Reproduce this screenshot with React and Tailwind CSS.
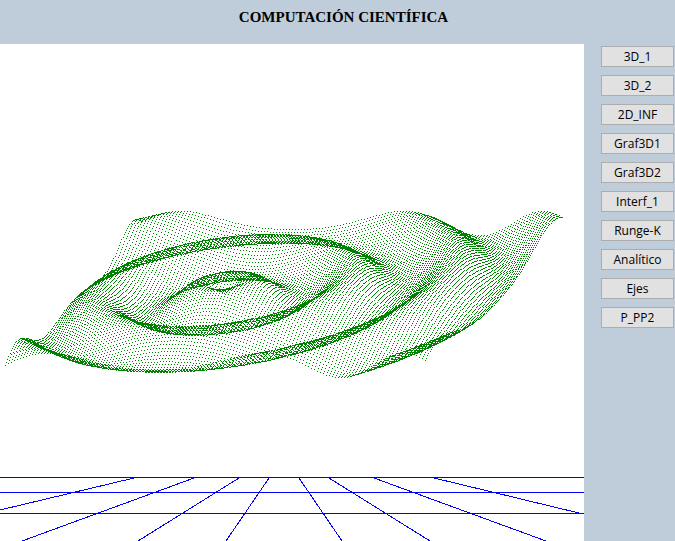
const demos = [
  "3D_1",
  "3D_2",
  "2D_INF",
  "Graf3D1",
  "Graf3D2",
  "Interf_1",
  "Runge-K",
  "Analítico",
  "Ejes",
  "P_PP2",
];

// Radial wave sampled on a regular grid and drawn in oblique projection.
const COLUMNS = 140;
const ROWS = 120;
const WAVELENGTH = 0.27;

function wavePath() {
  let d = "";
  for (let j = 0; j <= ROWS; j++) {
    for (let i = 0; i <= COLUMNS; i++) {
      const s = i / COLUMNS;
      const t = j / ROWS;
      const r = Math.hypot((s - 0.357) * 1.19, (t - 0.503) * 1.04);
      const z = 12.3 * Math.sin((2 * Math.PI * r) / WAVELENGTH);
      const x = Math.round(5 + 420 * s + 137 * t);
      const y = Math.round(321 - 142 * t - z);
      d += `M${x} ${y}h1v1h-1z`;
    }
  }
  return d;
}

const surface = wavePath();

function Plot() {
  return (
    <svg
      viewBox="0 0 584 497"
      className="block w-full"
      shapeRendering="crispEdges"
      role="img"
      aria-label="Superficie 3D"
    >
      <path d={surface} fill="#008000" />
      <path
        d="M0 433.5H584M0 448.5H584M0 469.5H584M134 434L0 466M194 434L22 497M239 434L138 497M269 434L226 497M299 434L342 497M329 434L430 497M374 434L546 497M434 434L581 469.5"
        fill="none"
        stroke="#0000ff"
        strokeWidth="1"
      />
    </svg>
  );
}

export default function App() {
  return (
    <div className="flex min-h-screen flex-col bg-[#bfccd9] text-black">
      <header className="flex h-11 shrink-0 justify-center pt-2 pl-3">
        <h1 className="font-['Liberation_Serif',serif] text-[15px] leading-[18px] font-bold">
          COMPUTACIÓN CIENTÍFICA
        </h1>
      </header>
      <div className="flex flex-1">
        <main className="min-w-0 flex-1 bg-white">
          <Plot />
        </main>
        <nav className="flex w-[91px] shrink-0 flex-col gap-2 pt-0.5 pr-px pl-[17px]">
          {demos.map((name) => (
            <button
              key={name}
              type="button"
              className="flex h-[21px] items-center justify-center border border-[#adadad] bg-[#e1e1e1] font-['Open_Sans',sans-serif] text-[12px] leading-4"
            >
              {name}
            </button>
          ))}
        </nav>
      </div>
    </div>
  );
}
